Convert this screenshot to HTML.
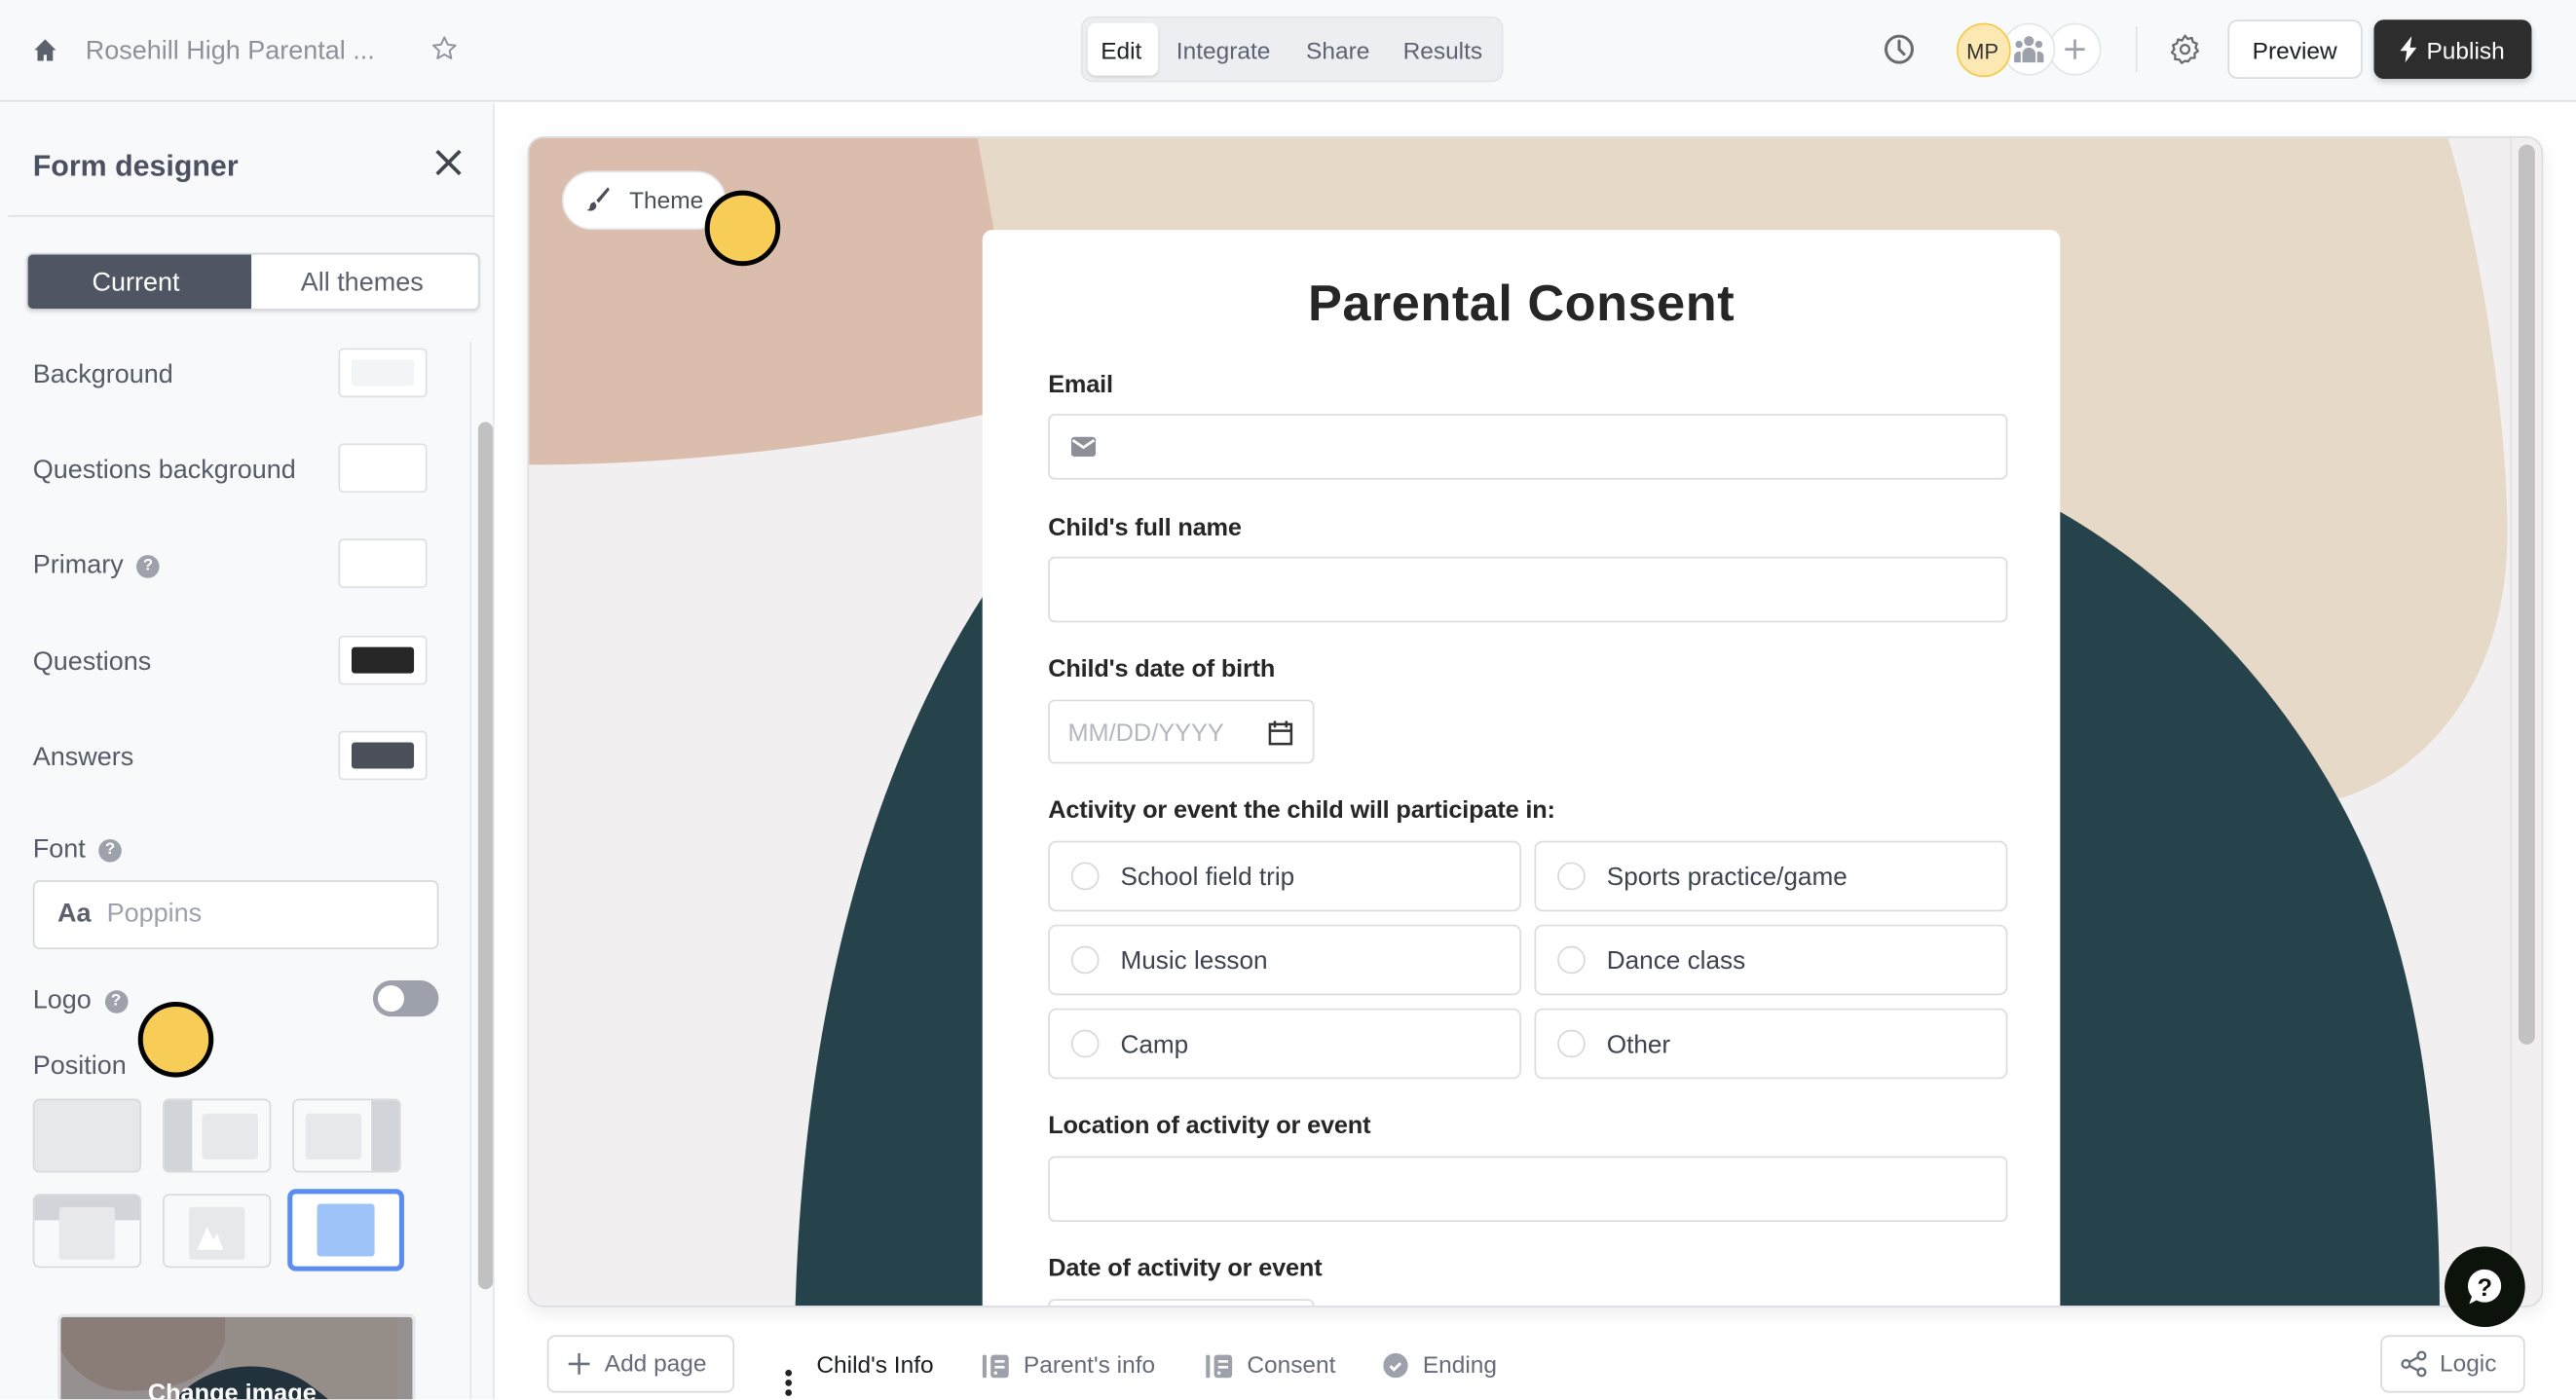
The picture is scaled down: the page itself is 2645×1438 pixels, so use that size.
<!DOCTYPE html>
<html><head><meta charset="utf-8">
<style>
*{box-sizing:border-box;margin:0;padding:0}
html,body{width:2645px;height:1438px;overflow:hidden;background:#fff;font-family:"Liberation Sans",sans-serif}
#s{position:absolute;left:0;top:0;width:1568px;height:852px;transform:scale(1.68686);transform-origin:0 0;background:#fff;overflow:hidden}
.a{position:absolute}
.t{position:absolute;white-space:nowrap;margin-top:2px}
.lbl{position:absolute;left:20px;font-size:16px;color:#555b66;margin-top:2px}
.sw{position:absolute;left:206px;width:54px;height:30px;border:1px solid #dcdfe3;border-radius:3px;background:#fff}
.sw i{position:absolute;left:7px;top:6px;right:7px;bottom:6px;border-radius:2px}
.tile{position:absolute;width:66px;height:45px;border:1.5px solid #d7d9dd;border-radius:4px;background:#f8f9fb;overflow:hidden}
.fl{position:absolute;left:40px;font-size:15px;color:#262626;font-weight:bold;letter-spacing:-.1px;margin-top:2px}
.in{position:absolute;left:40px;width:584px;height:40px;border:1.5px solid #dcdcdc;border-radius:4px;background:#fff}
.op{position:absolute;width:288px;height:43px;border:1.5px solid #dcdcdc;border-radius:5px;background:#fff;font-size:15.5px;color:#3e4350}
.op i{position:absolute;left:13px;top:12px;width:17px;height:17px;border:1.5px solid #d8d8d8;border-radius:50%}
.op span{position:absolute;left:43px;top:13px}
.q{display:inline-block;width:14px;height:14px;border-radius:50%;background:#9ca1ab;color:#fff;font-size:10px;font-weight:bold;text-align:center;line-height:14px;vertical-align:2px;margin-left:8px}
.tab{position:absolute;top:824px;font-size:14.5px;color:#656b78}
.dot{position:absolute;width:46px;height:46px;border-radius:50%;background:#f7cd58;border:3px solid #000}
</style></head><body><div id="s">

<!-- top bar -->
<div class="a" style="left:0;top:0;width:1568px;height:62px;background:#f8f9fb;border-bottom:1px solid #dcdfe3"></div>
<svg class="a" style="left:20px;top:23px" width="15" height="15" viewBox="0 0 16 16"><path d="M8 1L1 8h2v7h4v-4h2v4h4V8h2z" fill="#5b616d"/></svg>
<div class="t" style="left:52px;top:21px;font-size:16px;color:#8c919a">Rosehill High Parental ...</div>
<svg class="a" style="left:262px;top:21px" width="17" height="17" viewBox="0 0 24 24"><path d="M12 2.5l2.9 6.2 6.6.7-5 4.5 1.4 6.6L12 17.2 6.1 20.5l1.4-6.6-5-4.5 6.6-.7z" fill="none" stroke="#8c919a" stroke-width="1.6" stroke-linejoin="round"/></svg>
<div class="a" style="left:658px;top:10px;width:257px;height:40px;background:#eceef1;border-radius:7px;border:1px solid #e2e4e8"></div>
<div class="a" style="left:662px;top:14px;width:43px;height:32px;background:#fff;border-radius:5px;box-shadow:0 1px 2px rgba(0,0,0,.12)"></div>
<div class="t" style="left:670px;top:22px;font-size:14.5px;color:#1f2228">Edit</div>
<div class="t" style="left:716px;top:22px;font-size:14.5px;color:#5d6370">Integrate</div>
<div class="t" style="left:795px;top:22px;font-size:14.5px;color:#5d6370">Share</div>
<div class="t" style="left:854px;top:22px;font-size:14.5px;color:#5d6370">Results</div>
<svg class="a" style="left:1146px;top:20px" width="20" height="20" viewBox="0 0 20 20"><circle cx="10" cy="10" r="8" fill="none" stroke="#6b6b6b" stroke-width="1.8"/><path d="M10 5v5l3 3" fill="none" stroke="#6b6b6b" stroke-width="1.8" stroke-linecap="round"/></svg>
<div class="a" style="left:1247px;top:14px;width:32px;height:32px;border-radius:50%;background:#fff;border:1px solid #e3e5e8"></div>
<svg class="a" style="left:1256px;top:23px" width="14" height="14" viewBox="0 0 14 14"><path d="M7 1v12M1 7h12" stroke="#9ca1ab" stroke-width="1.6"/></svg>
<div class="a" style="left:1219px;top:14px;width:32px;height:32px;border-radius:50%;background:#fff;border:1px solid #e3e5e8"></div>
<svg class="a" style="left:1225px;top:21px" width="20" height="18" viewBox="0 0 20 18"><circle cx="10" cy="4" r="3" fill="#9ca1ab"/><circle cx="4" cy="6" r="2.2" fill="#9ca1ab"/><circle cx="16" cy="6" r="2.2" fill="#9ca1ab"/><path d="M6 17v-5a4 4 0 0 1 8 0v5z" fill="#9ca1ab"/><path d="M1 17v-4a3 3 0 0 1 4-2.5V17z M19 17v-4a3 3 0 0 0-4-2.5V17z" fill="#9ca1ab"/></svg>
<div class="a" style="left:1191px;top:14px;width:33px;height:33px;border-radius:50%;background:#fce8b2;border:1.5px solid #f5c94a"></div>
<div class="t" style="left:1197px;top:22px;font-size:13px;color:#333">MP</div>
<div class="a" style="left:1300px;top:16px;width:1px;height:28px;background:#e0e2e6"></div>
<svg class="a" style="left:1320px;top:20px" width="20" height="20" viewBox="0 0 24 24"><path d="M12 2l2 2.5 3-.8.8 3 2.9 1.2-1 2.9 1.8 2.5-2.5 1.8.2 3.1-3.1.2-1.8 2.5L12 20.5 9.6 22l-1.8-2.5-3.1-.2.2-3.1L2.4 14.4l1.8-2.5-1-2.9 2.9-1.2.8-3 3 .8z" fill="none" stroke="#6b6b6b" stroke-width="1.6" stroke-linejoin="round"/><circle cx="12" cy="12" r="3.2" fill="none" stroke="#6b6b6b" stroke-width="1.6"/></svg>
<div class="a" style="left:1356px;top:12px;width:82px;height:36px;background:#fff;border:1px solid #d9dbdf;border-radius:6px"></div>
<div class="t" style="left:1371px;top:22px;font-size:14.5px;color:#1b1d21">Preview</div>
<div class="a" style="left:1445px;top:12px;width:96px;height:36px;background:#2d2d2d;border-radius:6px;box-shadow:0 2px 4px rgba(0,0,0,.2)"></div>
<svg class="a" style="left:1461px;top:22px" width="11" height="16" viewBox="0 0 11 16"><path d="M7 0L0 9h4l-1 7 7-9H6z" fill="#fff"/></svg>
<div class="t" style="left:1477px;top:22px;font-size:14.5px;color:#fff">Publish</div>

<!-- sidebar -->
<div class="a" style="left:0;top:63px;width:301px;height:789px;background:#f8f9fb;border-right:1px solid #e4e6ea"></div>
<div class="t" style="left:20px;top:89px;font-size:18px;font-weight:bold;color:#4b5160">Form designer</div>
<svg class="a" style="left:264px;top:90px" width="18" height="18" viewBox="0 0 18 18"><path d="M2 2l14 14M16 2L2 16" stroke="#3f444d" stroke-width="2.2"/></svg>
<div class="a" style="left:5px;top:131px;width:296px;height:1px;background:#dcdfe3"></div>
<div class="a" style="left:16px;top:154px;width:276px;height:35px;border:1px solid #d4d7dc;border-radius:4px;background:#fff;box-shadow:0 1px 2px rgba(0,0,0,.1)"></div>
<div class="a" style="left:17px;top:155px;width:136px;height:33px;background:#4f5562;border-radius:3px 0 0 3px"></div>
<div class="t" style="left:56px;top:162px;font-size:16px;color:#fff">Current</div>
<div class="t" style="left:183px;top:162px;font-size:16px;color:#5a606c">All themes</div>
<div class="a" style="left:286px;top:208px;width:1px;height:644px;background:#e4e6ea"></div>
<div class="a" style="left:291px;top:257px;width:9px;height:528px;background:#c1c1c1;border-radius:5px"></div>

<div class="lbl" style="top:218px">Background</div><div class="sw" style="top:212px"><i style="background:#f3f4f6"></i></div>
<div class="lbl" style="top:276px">Questions background</div><div class="sw" style="top:270px"><i style="background:#fff"></i></div>
<div class="lbl" style="top:334px">Primary<span class="q">?</span></div><div class="sw" style="top:328px"><i style="background:#fff"></i></div>
<div class="lbl" style="top:393px">Questions</div><div class="sw" style="top:387px"><i style="background:#262626"></i></div>
<div class="lbl" style="top:451px">Answers</div><div class="sw" style="top:445px"><i style="background:#4a4f5a"></i></div>
<div class="lbl" style="top:507px">Font<span class="q">?</span></div>
<div class="a" style="left:20px;top:536px;width:247px;height:42px;border:1.5px solid #d7d9dd;border-radius:4px;background:#fff"></div>
<div class="t" style="left:35px;top:546px;font-size:16px;color:#5a606c;font-weight:bold">Aa</div>
<div class="t" style="left:65px;top:546px;font-size:16px;color:#9ca1ab">Poppins</div>
<div class="lbl" style="top:599px">Logo<span class="q">?</span></div>
<div class="a" style="left:227px;top:597px;width:40px;height:22px;border-radius:11px;background:#9ca1ab"></div>
<div class="a" style="left:230px;top:600px;width:16px;height:16px;border-radius:50%;background:#fff"></div>
<div class="lbl" style="top:639px">Position</div>

<div class="tile" style="left:20px;top:669px;background:#e7e8eb"></div>
<div class="tile" style="left:99px;top:669px"><div class="a" style="left:0;top:0;width:17px;height:45px;background:#d1d4d8"></div><div class="a" style="left:23px;top:8px;width:34px;height:28px;background:#e7e8eb;border-radius:2px"></div></div>
<div class="tile" style="left:178px;top:669px"><div class="a" style="right:0;top:0;width:17px;height:45px;background:#d1d4d8"></div><div class="a" style="left:7px;top:8px;width:34px;height:28px;background:#e7e8eb;border-radius:2px"></div></div>
<div class="tile" style="left:20px;top:727px"><div class="a" style="left:0;top:0;width:66px;height:15px;background:#d1d4d8"></div><div class="a" style="left:15px;top:7px;width:34px;height:32px;background:#e7e8eb;border-radius:2px"></div></div>
<div class="tile" style="left:99px;top:727px"><div class="a" style="left:15px;top:7px;width:34px;height:32px;background:#e7e8eb;border-radius:2px"></div><svg class="a" style="left:18px;top:15px" width="28" height="20" viewBox="0 0 28 20"><path d="M2 18l6-14 4 8 2-4 4 10z" fill="#fff"/></svg></div>
<div class="a" style="left:175px;top:724px;width:71px;height:50px;border:3px solid #5b8def;border-radius:5px;background:#fff"></div>
<div class="a" style="left:193px;top:733px;width:35px;height:32px;background:#9dc3f9;border-radius:2px"></div>

<div class="a" style="left:35px;top:800px;width:218px;height:52px;border-radius:4px 4px 0 0;overflow:hidden;background:#9a9a9a;border:2px solid #e4e6ea;border-bottom:0">
<svg class="a" style="left:0;top:0" width="218" height="60"><rect width="218" height="60" fill="#969190"/><path d="M0 0h100c5 20 -10 45 -60 45 C20 45 5 30 0 20z" fill="#8a7c76"/><path d="M100 0h105v60H100z" fill="#958d87"/><path d="M60 70 C70 30 120 20 150 40 C170 55 175 60 175 70z" fill="#21323c"/></svg>
<div class="t" style="left:53px;top:36px;font-size:15px;font-weight:bold;color:#fff">Change image</div></div>

<!-- preview frame -->
<div class="a" style="left:321px;top:83px;width:1227px;height:713px;border:1px solid #dadde1;border-radius:10px;overflow:hidden;background:#f1efef;box-shadow:0 4px 10px rgba(0,0,0,.07)">
<svg class="a" style="left:-322px;top:-84px" width="1568" height="900">
<path d="M322 84 L597 84 C606 120 612 160 610 250 C500 275 400 283 322 283 Z" fill="#dbbdad"/>
<path d="M595 84 L1490 84 C1508 140 1528 260 1526 334 C1522 440 1450 485 1410 489 L620 489 L605 140 Z" fill="#e6d9c7"/>
<path d="M484 800 C490 560 560 360 700 250 C850 140 1100 230 1253 311 C1330 355 1400 430 1440 520 C1470 590 1485 680 1485 800 Z" fill="#26434c"/>
</svg>
<div class="a" style="left:1211px;top:4px;width:10px;height:548px;background:#c2c2c2;border-radius:5px"></div>
<div class="a" style="left:1206px;top:0;width:1px;height:713px;background:#e2e2e2"></div>

<div class="a" style="left:276px;top:56px;width:656px;height:680px;background:#fff;border-radius:6px">
<div class="t" style="left:0;width:656px;text-align:center;top:25px;font-size:31px;font-weight:bold;color:#262626;letter-spacing:.3px">Parental Consent</div>
<div class="fl" style="top:84px">Email</div>
<div class="in" style="top:112px"><svg class="a" style="left:13px;top:12px" width="15" height="14" viewBox="0 0 15 14"><rect x="0" y="1" width="15" height="12" rx="2" fill="#8d9099"/><path d="M1 3l6.5 4.5L14 3" fill="none" stroke="#fff" stroke-width="1.6"/></svg></div>
<div class="fl" style="top:171px">Child's full name</div>
<div class="in" style="top:199px"></div>
<div class="fl" style="top:257px">Child's date of birth</div>
<div class="in" style="top:286px;width:162px;height:39px"><div class="t" style="left:11px;top:9px;font-size:15px;color:#b4b7bd">MM/DD/YYYY</div>
<svg class="a" style="left:133px;top:11px" width="15" height="16" viewBox="0 0 15 16"><rect x="1" y="3" width="13" height="12" fill="none" stroke="#333" stroke-width="1.5"/><path d="M1 7h13M4 1v4M11 1v4" stroke="#333" stroke-width="1.5"/></svg></div>
<div class="fl" style="top:343px">Activity or event the child will participate in:</div>
<div class="op" style="left:40px;top:372px"><i></i><span>School field trip</span></div>
<div class="op" style="left:336px;top:372px"><i></i><span>Sports practice/game</span></div>
<div class="op" style="left:40px;top:423px"><i></i><span>Music lesson</span></div>
<div class="op" style="left:336px;top:423px"><i></i><span>Dance class</span></div>
<div class="op" style="left:40px;top:474px"><i></i><span>Camp</span></div>
<div class="op" style="left:336px;top:474px"><i></i><span>Other</span></div>
<div class="fl" style="top:535px">Location of activity or event</div>
<div class="in" style="top:564px"></div>
<div class="fl" style="top:622px">Date of activity or event</div>
<div class="in" style="top:651px;width:162px"></div>
</div>

<div class="a" style="left:20px;top:20px;width:100px;height:36px;background:#fff;border:1px solid #e0e2e6;border-radius:18px"></div>
<svg class="a" style="left:34px;top:29px" width="16" height="16" viewBox="0 0 16 16"><path d="M14 1L7 9l1.5 1.5L15 2.5z" fill="#4b4f57"/><path d="M6 10c-2 0-3 1.5-3 3.5-.5 1-1.5 1.5-2 1.5 3 1 6 0 6-3z" fill="#4b4f57"/></svg>
<div class="t" style="left:61px;top:29px;font-size:14.5px;color:#4b4f57">Theme</div>
</div>

<div class="dot" style="left:429px;top:116px"></div>
<div class="dot" style="left:84px;top:610px"></div>

<!-- help -->
<div class="a" style="left:1488px;top:759px;width:49px;height:49px;border-radius:50%;background:#0c130b"></div>
<svg class="a" style="left:1500px;top:771px" width="25" height="25" viewBox="0 0 25 25"><path d="M12.5 2a10 10 0 1 1-5 18.7L3 23l1.6-4.5A10 10 0 0 1 12.5 2z" fill="#fff"/><text x="12.5" y="18" font-family="Liberation Sans" font-weight="bold" font-size="15" text-anchor="middle" fill="#0c130b">?</text></svg>

<!-- bottom bar -->
<div class="a" style="left:333px;top:813px;width:114px;height:35px;border:1px solid #d6d9de;border-radius:5px;background:#fff"></div>
<svg class="a" style="left:346px;top:824px" width="13" height="13" viewBox="0 0 13 13"><path d="M6.5 0v13M0 6.5h13" stroke="#6b717c" stroke-width="1.5"/></svg>
<div class="t" style="left:368px;top:821px;font-size:14.5px;color:#656b78">Add page</div>
<div class="a" style="left:478px;top:834px;width:4px;height:4px;border-radius:2px;background:#222"></div>
<div class="a" style="left:478px;top:840px;width:4px;height:4px;border-radius:2px;background:#222"></div>
<div class="a" style="left:478px;top:846px;width:4px;height:4px;border-radius:2px;background:#222"></div>
<div class="tab" style="left:497px;color:#1b1d21">Child's Info</div>
<svg class="a" style="left:598px;top:824px" width="17" height="16" viewBox="0 0 17 16"><rect x="0" y="1" width="2.5" height="14" rx="1" fill="#9ca1ab"/><rect x="5" y="1" width="11" height="14" rx="2" fill="#9ca1ab"/><path d="M7.5 5h6M7.5 8.5h6" stroke="#fff" stroke-width="1.5"/><circle cx="8" cy="12" r="1" fill="#fff"/></svg>
<div class="tab" style="left:623px">Parent's info</div>
<svg class="a" style="left:734px;top:824px" width="17" height="16" viewBox="0 0 17 16"><rect x="0" y="1" width="2.5" height="14" rx="1" fill="#9ca1ab"/><rect x="5" y="1" width="11" height="14" rx="2" fill="#9ca1ab"/><path d="M7.5 5h6M7.5 8.5h6" stroke="#fff" stroke-width="1.5"/><circle cx="8" cy="12" r="1" fill="#fff"/></svg>
<div class="tab" style="left:759px">Consent</div>
<svg class="a" style="left:842px;top:824px" width="15" height="15" viewBox="0 0 15 15"><circle cx="7.5" cy="7.5" r="7.5" fill="#9ca1ab"/><path d="M4.3 7.8l2.2 2.2 4-4" fill="none" stroke="#fff" stroke-width="1.7"/></svg>
<div class="tab" style="left:866px">Ending</div>
<div class="a" style="left:1449px;top:813px;width:88px;height:35px;border:1px solid #d6d9de;border-radius:5px;background:#fff"></div>
<svg class="a" style="left:1461px;top:822px" width="17" height="17" viewBox="0 0 17 17"><circle cx="3.5" cy="8.5" r="2.3" fill="none" stroke="#6b717c" stroke-width="1.4"/><circle cx="13" cy="3.5" r="2.3" fill="none" stroke="#6b717c" stroke-width="1.4"/><circle cx="13" cy="13.5" r="2.3" fill="none" stroke="#6b717c" stroke-width="1.4"/><path d="M5.5 7.4l5.5-3M5.5 9.6l5.5 3" stroke="#6b717c" stroke-width="1.4"/></svg>
<div class="t" style="left:1485px;top:821px;font-size:14.5px;color:#656b78">Logic</div>

</div></body></html>
